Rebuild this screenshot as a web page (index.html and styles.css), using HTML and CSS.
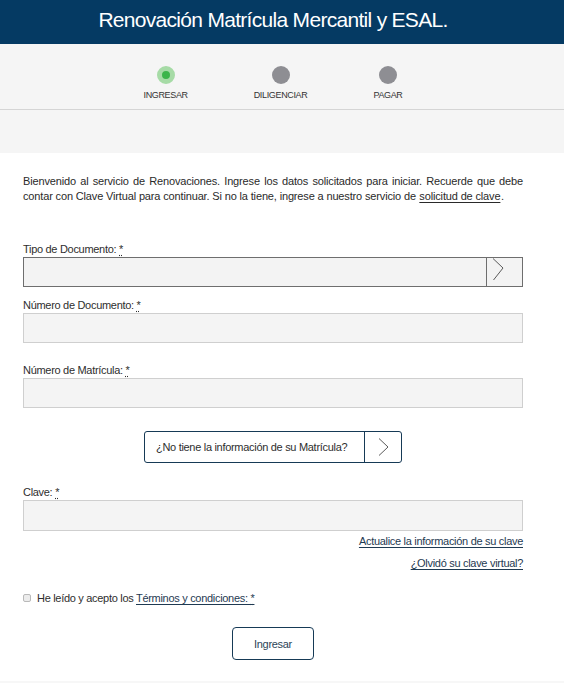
FILE: index.html
```html
<!DOCTYPE html>
<html lang="es">
<head>
<meta charset="utf-8">
<title>Renovación Matrícula Mercantil y ESAL.</title>
<link rel="stylesheet" href="styles.css">
</head>
<body>
<header class="topbar">
  <h1 class="topbar-title">Renovación Matrícula Mercantil y ESAL.</h1>
</header>
<section class="steps-wrap">
  <ol class="steps">
    <li class="step step-active"><span class="dot"></span><span class="step-label">INGRESAR</span></li>
    <li class="step"><span class="dot"></span><span class="step-label">DILIGENCIAR</span></li>
    <li class="step"><span class="dot"></span><span class="step-label">PAGAR</span></li>
  </ol>
</section>
<div class="steps-band"></div>
<main class="content">
  <p class="intro">Bienvenido al servicio de Renovaciones. Ingrese los datos solicitados para iniciar. Recuerde que debe contar con Clave Virtual para continuar. Si no la tiene, ingrese a nuestro servicio de <a href="#" class="link">solicitud de clave</a>.</p>

  <div class="field field-tipo">
    <label class="label">Tipo de Documento: <abbr class="req" title="requerido">*</abbr></label>
    <div class="select">
      <span class="select-value"></span>
      <span class="select-arrow">
        <svg width="12" height="23" viewBox="0 0 12 23"><path d="M1 0.5 L11 10 L1.5 22" fill="none" stroke="#5a5a5a" stroke-width="1"/></svg>
      </span>
    </div>
  </div>

  <div class="field field-doc">
    <label class="label">Número de Documento: <abbr class="req" title="requerido">*</abbr></label>
    <div class="input"></div>
  </div>

  <div class="field field-mat">
    <label class="label">Número de Matrícula: <abbr class="req" title="requerido">*</abbr></label>
    <div class="input"></div>
  </div>

  <div class="center-row row-info">
    <button class="info-btn" type="button">
      <span class="info-text">¿No tiene la información de su Matrícula?</span>
      <span class="info-arrow">
        <svg width="11" height="18" viewBox="0 0 11 18"><path d="M1 0.5 L10 9 L1 17.5" fill="none" stroke="#5a5a5a" stroke-width="1"/></svg>
      </span>
    </button>
  </div>

  <div class="field field-clave">
    <label class="label">Clave: <abbr class="req" title="requerido">*</abbr></label>
    <div class="input input-clave"></div>
  </div>

  <div class="links">
    <a href="#" class="link">Actualice la información de su clave</a>
    <a href="#" class="link">¿Olvidó su clave virtual?</a>
  </div>

  <div class="terms">
    <input type="checkbox" class="check">
    <span class="terms-text">He leído y acepto los <a href="#" class="link">Términos y condiciones: <abbr class="req" title="requerido">*</abbr></a></span>
  </div>

  <div class="center-row row-submit">
    <button class="submit-btn" type="button">Ingresar</button>
  </div>
</main>
<footer class="footer-band"></footer>
</body>
</html>
```

FILE: styles.css
```css
* { box-sizing: border-box; }

body {
  margin: 0;
  font-family: "Liberation Sans", Arial, sans-serif;
  color: #2e2e2e;
  background: #fff;
}

.topbar {
  height: 44px;
  background: #053a63;
  padding: 7px 41px 0 23px;
}

.topbar-title {
  margin: 0;
  color: #fff;
  font-weight: normal;
  font-size: 21px;
  line-height: 26px;
  letter-spacing: -0.7px;
  text-align: center;
  white-space: nowrap;
}

.steps-wrap {
  background: #f5f5f5;
  height: 66px;
  border-bottom: 1px solid #d5d5d5;
}

.steps {
  list-style: none;
  margin: 0;
  padding: 22px 41px 0 23px;
  display: flex;
  justify-content: center;
  gap: 66px;
}

.step {
  display: flex;
  flex-direction: column;
  align-items: center;
}

.dot {
  width: 18px;
  height: 18px;
  border-radius: 50%;
  background: #8e8e93;
}

.step-active .dot {
  background: #3cb54a;
  border: 5px solid #a6dba6;
}

.step-label {
  margin-top: 6px;
  font-size: 9px;
  line-height: 11px;
  color: #333;
  letter-spacing: -0.35px;
}

.steps-band {
  background: #f5f5f5;
  height: 43px;
}

.content {
  padding: 21px 41px 0 23px;
  font-size: 11px;
  letter-spacing: -0.3px;
}

.intro {
  margin: 0;
  font-size: 11px;
  line-height: 15px;
  letter-spacing: -0.15px;
  text-align: justify;
  color: #2a2a2a;
}

.link {
  color: #1f3a52;
  text-decoration: underline;
  text-underline-offset: 2px;
}

.intro .link {
  color: #2a2a2a;
  padding: 0 0.5px;
}

.field { display: flex; flex-direction: column; }

.field-tipo { margin-top: 38px; }
.field-doc { margin-top: 11px; }
.field-mat { margin-top: 20px; }
.field-clave { margin-top: 22px; }

.label {
  font-size: 11px;
  line-height: 14px;
  margin-bottom: 1px;
  color: #2e2e2e;
}

.req {
  text-decoration: underline dotted;
  text-underline-offset: 2px;
  color: inherit;
}

.select {
  height: 30px;
  display: flex;
  border: 1px solid #6e6e6e;
  background: #f3f3f3;
}

.select-value { flex: 1; }

.select-arrow {
  width: 36px;
  border-left: 1px solid #6e6e6e;
  display: flex;
  align-items: flex-start;
  padding-left: 5px;
}

.input {
  height: 30px;
  border: 1px solid #cfcfcf;
  background: #f4f4f4;
}

.input-clave { height: 31px; }

.center-row {
  display: flex;
  justify-content: center;
}

.row-info { margin-top: 23px; }

.info-btn {
  display: flex;
  align-items: stretch;
  height: 32px;
  width: 258px;
  padding: 0;
  border: 1px solid #163a56;
  border-radius: 3px;
  background: #fff;
  font-family: inherit;
  letter-spacing: -0.3px;
  cursor: pointer;
}

.info-text {
  flex: 1;
  display: flex;
  align-items: center;
  padding-left: 11px;
  font-size: 11px;
  white-space: nowrap;
  color: #2e2e2e;
}

.info-arrow {
  width: 37px;
  border-left: 1px solid #163a56;
  display: flex;
  align-items: center;
  justify-content: center;
}

.links {
  display: flex;
  flex-direction: column;
  align-items: flex-end;
  gap: 8px;
  margin-top: 3px;
  font-size: 11px;
  line-height: 14px;
}

.terms {
  margin-top: 21px;
  display: flex;
  align-items: center;
  gap: 6px;
  font-size: 11px;
  line-height: 14px;
}

.check {
  appearance: none;
  -webkit-appearance: none;
  margin: 0;
  width: 8px;
  height: 8px;
  border: 1px solid #b9b9b9;
  border-radius: 2px;
  background: #ececec;
}

.row-submit { margin-top: 22px; }

.submit-btn {
  width: 82px;
  height: 33px;
  border: 1px solid #163a56;
  border-radius: 4px;
  background: #fff;
  font-family: inherit;
  font-size: 11px;
  letter-spacing: -0.3px;
  color: #2c4558;
  cursor: pointer;
}

.footer-band {
  margin-top: 21px;
  height: 20px;
  background: #f7f7f7;
}
```
